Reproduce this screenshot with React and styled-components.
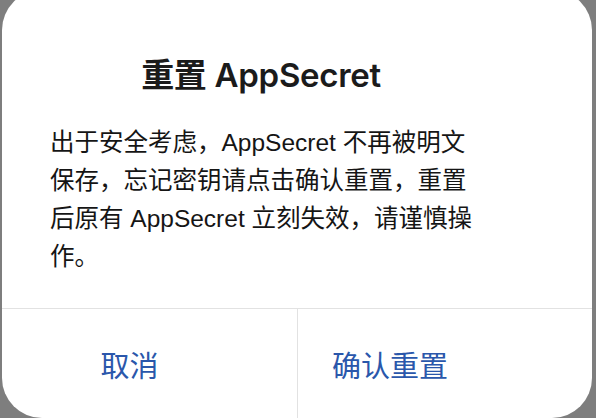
import React from "react";
import styled, { createGlobalStyle } from "styled-components";

const GlobalStyle = createGlobalStyle`
  html, body {
    margin: 0;
    padding: 0;
    height: 418px;
    overflow: hidden;
    background: #7e7e7e;
  }
`;

const Backdrop = styled.div`
  height: 418px;
  padding: 0 4px 0 2px;
  font-family: "Liberation Sans", "Noto Sans CJK SC", sans-serif;
`;

const Dialog = styled.div`
  margin-top: -10px;
  background: #ffffff;
  border-radius: 40px;
  display: flex;
  flex-direction: column;
  overflow: hidden;
`;

const Title = styled.h1`
  margin: 65px 0 0;
  padding-right: 72px;
  font-family: Inter, "Noto Sans CJK SC", sans-serif;
  font-size: 33px;
  line-height: 40px;
  font-weight: 600;
  letter-spacing: -0.3px;
  color: #1b1b1b;
  text-align: center;
`;

const Message = styled.p`
  margin: 29px 0 32px;
  padding: 0 112px 0 48px;
  font-size: 24.5px;
  line-height: 38px;
  color: #151515;
`;

const Footer = styled.div`
  display: grid;
  grid-template-columns: 295px 1fr;
  height: 109px;
  border-top: 1px solid #e2e2e2;
`;

const Action = styled.button`
  border: none;
  background: transparent;
  border-left: ${(p) => (p.$divided ? "1px solid #e2e2e2" : "none")};
  padding: 0 ${(p) => p.$shift}px 0 0;
  font-family: inherit;
  font-size: 29px;
  color: #2a57ab;
  cursor: pointer;
`;

export default function App() {
  return (
    <>
      <GlobalStyle />
      <Backdrop>
        <Dialog>
          <Title>重置 AppSecret</Title>
          <Message>
            出于安全考虑，AppSecret 不再被明文保存，忘记密钥请点击确认重置，重置后原有 AppSecret 立刻失效，请谨慎操作。
          </Message>
          <Footer>
            <Action $shift={40}>取消</Action>
            <Action $divided $shift={110}>确认重置</Action>
          </Footer>
        </Dialog>
      </Backdrop>
    </>
  );
}
